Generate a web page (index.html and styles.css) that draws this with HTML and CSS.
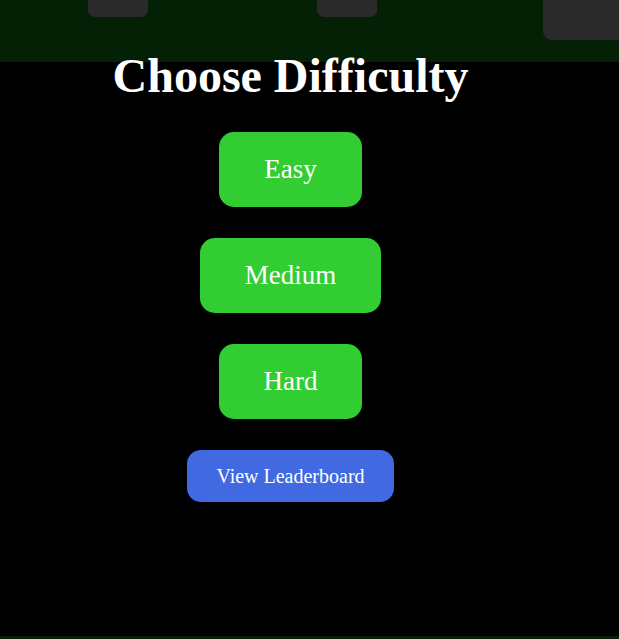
FILE: index.html
```html
<!DOCTYPE html>
<html lang="en">
<head>
<meta charset="utf-8">
<title>Choose Difficulty</title>
<link rel="stylesheet" href="styles.css">
</head>
<body>
<header class="board">
  <div class="tile tile-a"></div>
  <div class="tile tile-b"></div>
  <div class="tile tile-c"></div>
</header>
<main class="menu">
  <h1 class="menu-title">Choose Difficulty</h1>
  <button class="btn btn-level">Easy</button>
  <button class="btn btn-level">Medium</button>
  <button class="btn btn-level">Hard</button>
  <button class="btn btn-board">View Leaderboard</button>
</main>
<footer class="strip"></footer>
</body>
</html>
```
FILE: styles.css
```css
html, body {
  margin: 0;
  padding: 0;
  background: #000;
  height: 100%;
  overflow: hidden;
}
body {
  font-family: "Liberation Serif", "Times New Roman", serif;
  color: #fff;
}
.board {
  height: 62px;
  background: #052105;
  display: flex;
  align-items: flex-start;
  overflow: hidden;
  padding-left: 88px;
}
.tile {
  background: #2a2a2a;
  flex: none;
}
.tile-a, .tile-b {
  width: 60px;
  height: 60px;
  margin-top: -43px;
  border-radius: 7px;
}
.tile-b { margin-left: 169px; }
.tile-c {
  width: 90px;
  height: 80px;
  margin-top: -40px;
  margin-left: 166px;
  border-radius: 9px;
}
.menu {
  height: 574px;
  background: #000;
  display: flex;
  flex-direction: column;
  align-items: center;
  padding-right: 38px;
  box-sizing: border-box;
}
.menu-title {
  font-size: 48px;
  font-weight: bold;
  margin: -13px 0 30px;
  line-height: 53px;
}
.btn {
  font-family: "Liberation Serif", "Times New Roman", serif;
  color: #fff;
  border: none;
  cursor: pointer;
}
.btn-level {
  background: #32cd32;
  font-size: 27px;
  line-height: 31px;
  padding: 22px 45px;
  border-radius: 15px;
  margin-bottom: 31px;
}
.btn-board {
  background: #4169e1;
  font-size: 20px;
  line-height: 23px;
  padding: 15px 29px 14px;
  border-radius: 14px;
}
.strip {
  height: 3px;
  background: #0c1d0c;
}
```
